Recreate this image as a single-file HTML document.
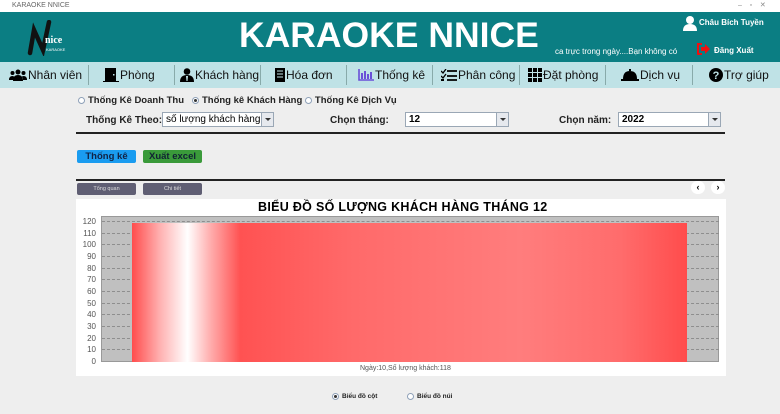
<!DOCTYPE html>
<html><head><meta charset="utf-8"><style>
*{margin:0;padding:0;box-sizing:border-box}
body{width:780px;height:414px;background:#eeeeee;font-family:"Liberation Sans",Arial,sans-serif;position:relative;overflow:hidden}
.a{position:absolute;white-space:nowrap}
.nav{position:absolute;top:62px;left:0;width:780px;height:26px;background:#bfe2e6}
.ni{position:absolute;top:6px;font-size:12px;color:#111;display:flex;align-items:center;gap:1px}
.ni svg{display:block}
.sep{position:absolute;top:3px;width:1px;height:20px;background:#8aa}
.b{font-weight:bold}
.combo{position:absolute;height:15px;background:#fff;border:1px solid #9aa7b5;font-size:10px;padding:1px 3px}
.combo i{position:absolute;right:0;top:0;width:12px;height:13px;background:#e6e9ee;border-left:1px solid #9aa7b5}
.combo i:after{content:"";position:absolute;left:3px;top:5px;border:3px solid transparent;border-top:3px solid #333}
.yl{position:absolute;left:78px;width:18px;text-align:right;font-size:8px;color:#555}
.gl{position:absolute;left:102px;width:617px;border-top:1px dashed #8e8e8e;height:0}
.rad{display:inline-block;width:7px;height:7px;border-radius:50%;border:1px solid #8ea0b8;background:#fff;vertical-align:middle;margin-right:3px;position:relative}
.rad.on:after{content:"";position:absolute;left:1px;top:1px;width:3px;height:3px;border-radius:50%;background:#333}
</style></head><body>
<div class="a" style="left:0;top:0;width:780px;height:12px;background:#fff"></div>
<div class="a" style="left:12px;top:2px;font-size:7px;color:#666">KARAOKE NNICE</div>
<div class="a" style="left:738px;top:1px;font-size:7px;color:#888">–&nbsp;&nbsp;&nbsp;&nbsp;▫&nbsp;&nbsp;&nbsp;&nbsp;✕</div>
<div class="a" style="left:0;top:12px;width:780px;height:50px;background:#0b7e83"></div>
<div class="a" style="left:26px;top:20px;width:46px;height:36px">
<svg width="46" height="36"><path d="M4 33 L8 10 L17 30 L23 2" stroke="#111" stroke-width="4.5" fill="none" stroke-linecap="round"/></svg>
<span class="a" style="left:19px;top:15px;font:bold 10px 'Liberation Serif',serif;color:#fff">nice</span>
<span class="a" style="left:20px;top:27px;font-size:4px;color:#fff">KARAOKE</span>
</div>
<div class="a b" style="left:239px;top:15px;font-size:35.5px;color:#fff">KARAOKE NNICE</div>
<div class="a" style="left:555px;top:47px;font-size:8px;color:#fff">ca trực trong ngày....Bạn không có</div>
<div class="a" style="left:683px;top:15px;width:14px;height:16px"><svg width="14" height="16"><circle cx="7" cy="5" r="4" fill="#fff"/><path d="M0 16 Q0 9 7 9 Q14 9 14 16Z" fill="#fff"/></svg></div>
<div class="a b" style="left:699px;top:18px;font-size:8px;color:#fff">Châu Bích Tuyền</div>
<div class="a" style="left:697px;top:42px;width:14px;height:12px"><svg width="14" height="12"><path d="M5 1 H1 V11 H5" stroke="#e11" stroke-width="2" fill="none"/><path d="M4 4 H8 V1 L13 6 L8 11 V8 H4Z" fill="#e11"/></svg></div>
<div class="a b" style="left:714px;top:46px;font-size:8px;color:#fff">Đăng Xuất</div>
<div class="nav">
<span class="ni" style="left:9px"><svg width="18" height="12"><circle cx="9" cy="3" r="2.5"/><circle cx="3.5" cy="4" r="2"/><circle cx="14.5" cy="4" r="2"/><path d="M4 12 Q4 6 9 6 Q14 6 14 12Z M0 11 Q0 7 3.5 7 Q5 7 5 8 L4 11Z M18 11 Q18 7 14.5 7 Q13 7 13 8 L14 11Z"/></svg>Nhân viên</span><div class="sep" style="left:88px"></div>
<span class="ni" style="left:103px"><svg width="16" height="14"><path d="M2 0 H13 V13 H16 V14 H0 V13 H2Z"/><rect x="10" y="6" width="1.5" height="1.5" fill="#bfe2e6"/></svg> Phòng</span><div class="sep" style="left:174px"></div>
<span class="ni" style="left:180px"><svg width="14" height="14"><circle cx="7" cy="3.5" r="3.3"/><path d="M0 14 Q0 7 7 7 Q14 7 14 14Z"/><path d="M6 8 L8 8 L7.5 13 L6.5 13Z" fill="#bfe2e6"/></svg>Khách hàng</span><div class="sep" style="left:260px"></div>
<span class="ni" style="left:275px"><svg width="10" height="14"><rect x="0" y="0" width="10" height="14"/><path d="M2 3H8M2 6H8M2 9H8" stroke="#bfe2e6"/></svg> Hóa đơn</span><div class="sep" style="left:346px"></div>
<span class="ni" style="left:358px"><svg width="16" height="12"><path d="M1 0V11H16" stroke="#6a4fd8" stroke-width="1.6" fill="none"/><path d="M4 4V10M7 2V10M10 5V10M13 3V10" stroke="#6a4fd8" stroke-width="2"/></svg>Thống kê</span><div class="sep" style="left:432px"></div>
<span class="ni" style="left:441px"><svg width="16" height="12"><path d="M0 2L2 4L5 0M0 7L2 9L5 5" stroke="#000" stroke-width="1.3" fill="none"/><rect x="0" y="10" width="3" height="2"/><path d="M6 2H16M6 7H16M6 11H16" stroke="#000" stroke-width="1.8"/></svg>Phân công</span><div class="sep" style="left:519px"></div>
<span class="ni" style="left:528px"><svg width="14" height="14"><path d="M0 0h4v4h-4zM5 0h4v4h-4zM10 0h4v4h-4zM0 5h4v4h-4zM5 5h4v4h-4zM10 5h4v4h-4zM0 10h4v4h-4zM5 10h4v4h-4zM10 10h4v4h-4z"/></svg>Đặt phòng</span><div class="sep" style="left:605px"></div>
<span class="ni" style="left:621px"><svg width="18" height="12"><path d="M2 10 Q2 2 9 2 Q16 2 16 10Z"/><rect x="0" y="10" width="18" height="2"/><rect x="8" y="0" width="2" height="2"/></svg>Dịch vụ</span><div class="sep" style="left:692px"></div>
<span class="ni" style="left:709px"><svg width="14" height="14"><circle cx="7" cy="7" r="7"/><text x="7" y="11" font-size="11" font-weight="bold" fill="#bfe2e6" text-anchor="middle" font-family="Liberation Sans">?</text></svg>Trợ giúp</span>
</div>
<div class="a b" style="left:78px;top:95px;font-size:9.5px;color:#222"><span class="rad"></span>Thống Kê Doanh Thu&nbsp;&nbsp;&nbsp;<span class="rad on"></span>Thống kê Khách Hàng&nbsp;<span class="rad"></span>Thống Kê Dịch Vụ</div>
<div class="a b" style="left:86px;top:115px;font-size:10px;color:#222">Thống Kê Theo:</div>
<div class="combo" style="left:162px;top:112px;width:112px">số lượng khách hàng<i></i></div>
<div class="a b" style="left:330px;top:115px;font-size:10px;color:#222">Chọn tháng:</div>
<div class="combo b" style="left:405px;top:112px;width:104px">12<i></i></div>
<div class="a b" style="left:559px;top:115px;font-size:10px;color:#222">Chọn năm:</div>
<div class="combo b" style="left:618px;top:112px;width:103px">2022<i></i></div>
<div class="a" style="left:76px;top:132px;width:649px;height:2px;background:#222"></div>
<div class="a b" style="left:77px;top:150px;width:59px;height:13px;background:#1a9cf0;border-radius:2px;font-size:9.5px;color:#124;text-align:center;line-height:13px">Thống kê</div>
<div class="a b" style="left:143px;top:150px;width:59px;height:13px;background:#3a9a3a;border-radius:2px;font-size:9.5px;color:#123;text-align:center;line-height:13px">Xuất excel</div>
<div class="a" style="left:76px;top:179px;width:649px;height:2px;background:#222"></div>
<div class="a" style="left:77px;top:183px;width:59px;height:12px;background:#5f5e73;border-radius:2px;font-size:5.5px;color:#ddd;text-align:center;line-height:12px">Tổng quan</div>
<div class="a" style="left:143px;top:183px;width:59px;height:12px;background:#5f5e73;border-radius:2px;font-size:5.5px;color:#ddd;text-align:center;line-height:12px">Chi tiết</div>
<div class="a b" style="left:691px;top:181px;width:14px;height:13px;background:#fff;border-radius:7px;font-size:9px;text-align:center;line-height:13px">‹</div>
<div class="a b" style="left:711px;top:181px;width:14px;height:13px;background:#fff;border-radius:7px;font-size:9px;text-align:center;line-height:13px">›</div>
<div class="a" style="left:76px;top:199px;width:650px;height:177px;background:#fff"></div>
<div class="a b" style="left:258px;top:200px;font-size:12.5px;color:#000;letter-spacing:0.3px">BIỂU ĐỒ SỐ LƯỢNG KHÁCH HÀNG THÁNG 12</div>
<div class="a" style="left:101px;top:216px;width:618px;height:146px;background:#c0c0c0;border:1px solid #999"></div>
<div class="gl" style="top:221px"></div><div class="gl" style="top:233px"></div><div class="gl" style="top:244px"></div><div class="gl" style="top:256px"></div><div class="gl" style="top:268px"></div><div class="gl" style="top:279px"></div><div class="gl" style="top:291px"></div><div class="gl" style="top:303px"></div><div class="gl" style="top:314px"></div><div class="gl" style="top:326px"></div><div class="gl" style="top:338px"></div><div class="gl" style="top:349px"></div>
<div class="a" style="left:132px;top:223px;width:555px;height:139px;background:linear-gradient(90deg,#ff4c4c 0%,#ffb0b0 5%,#fff 10%,#ffb0b0 14%,#ff5252 19.5%,#ff6a6a 40%,#ff7d7d 70%,#ff6c6c 88%,#ff4c4c 100%)"></div>
<div class="yl" style="top:217px">120</div><div class="yl" style="top:229px">110</div><div class="yl" style="top:240px">100</div><div class="yl" style="top:252px">90</div><div class="yl" style="top:264px">80</div><div class="yl" style="top:275px">70</div><div class="yl" style="top:287px">60</div><div class="yl" style="top:299px">50</div><div class="yl" style="top:310px">40</div><div class="yl" style="top:322px">30</div><div class="yl" style="top:334px">20</div><div class="yl" style="top:345px">10</div><div class="yl" style="top:357px">0</div>
<div class="a" style="left:360px;top:365px;font-size:7px;color:#555">Ngày:10,Số lượng khách:118</div>
<div class="a b" style="left:332px;top:393px;font-size:6.5px;color:#222"><span class="rad on"></span>Biểu đồ cột</div>
<div class="a b" style="left:407px;top:393px;font-size:6.5px;color:#222"><span class="rad"></span>Biểu đồ núi</div>
</body></html>
